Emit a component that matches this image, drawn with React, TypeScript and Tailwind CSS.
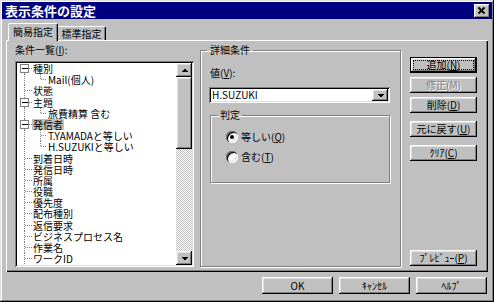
import React from "react";

/* ── WIN95 BEVELS ─────────────────────────────────── */
const raised =
  "shadow-[inset_-1px_-1px_0_#000,inset_1px_1px_0_#fff,inset_-2px_-2px_0_#808080,inset_2px_2px_0_#dfdfdf]";
const sunken =
  "shadow-[inset_1px_1px_0_#808080,inset_-1px_-1px_0_#fff,inset_2px_2px_0_#000,inset_-2px_-2px_0_#dfdfdf]";
const etched = "border border-[#808080] shadow-[inset_1px_1px_0_#fff,1px_1px_0_#fff]";

/* ── TREE DATA ────────────────────────────────────── */
type TreeRow = { label: string; level: 0 | 1; open?: boolean; last?: boolean; selected?: boolean };

const treeRows: TreeRow[] = [
  { label: "種別", level: 0, open: true },
  { label: "Mail(個人)", level: 1, last: true },
  { label: "状態", level: 0 },
  { label: "主題", level: 0, open: true },
  { label: "旅費精算 含む", level: 1, last: true },
  { label: "発信者", level: 0, open: true, selected: true },
  { label: "T.YAMADAと等しい", level: 1 },
  { label: "H.SUZUKIと等しい", level: 1, last: true },
  { label: "到着日時", level: 0 },
  { label: "発信日時", level: 0 },
  { label: "所属", level: 0 },
  { label: "役職", level: 0 },
  { label: "優先度", level: 0 },
  { label: "配布種別", level: 0 },
  { label: "返信要求", level: 0 },
  { label: "ビジネスプロセス名", level: 0 },
  { label: "作業名", level: 0 },
  { label: "ワークID", level: 0 },
];

const ROW_H = 11.2;
const MID = 5.5;

function Dots(props: { x1: number; y1: number; x2: number; y2: number }) {
  return <line {...props} stroke="#808080" strokeDasharray="1 1" />;
}

function Gutter({ row, first }: { row: TreeRow; first: boolean }) {
  const w = row.level === 0 ? 15 : 30;
  return (
    <svg width={w} height={ROW_H} className="shrink-0" shapeRendering="crispEdges">
      <Dots x1={7.5} y1={first ? MID : 0} x2={7.5} y2={ROW_H} />
      {row.level === 0 && <Dots x1={8} y1={MID} x2={15} y2={MID} />}
      {row.level === 0 && row.open && (
        <>
          <rect x={3.5} y={MID - 4} width={8} height={8} fill="#fff" stroke="#808080" />
          <line x1={5} y1={MID} x2={11} y2={MID} stroke="#000" />
        </>
      )}
      {row.level === 1 && (
        <>
          <Dots x1={23.5} y1={0} x2={23.5} y2={row.last ? MID : ROW_H} />
          <Dots x1={24} y1={MID} x2={30} y2={MID} />
        </>
      )}
    </svg>
  );
}

function Arrow({ down }: { down?: boolean }) {
  return (
    <svg width="16" height="14" shapeRendering="crispEdges">
      <polygon points={down ? "5,6 12,6 8.5,9.5" : "5,9 12,9 8.5,5.5"} fill="#000" />
    </svg>
  );
}

function Btn({
  children, className = "", isDefault, disabled,
}: { children: React.ReactNode; className?: string; isDefault?: boolean; disabled?: boolean }) {
  return (
    <div className={`flex items-center justify-center bg-[#c0c0c0] leading-none ${raised} ${isDefault ? "border border-black" : ""} ${className}`}>
      {isDefault ? (
        <span className="flex-1 self-stretch m-[2px] border border-dotted border-black flex items-center justify-center">
          {children}
        </span>
      ) : (
        <span className={disabled ? "text-[#808080] [text-shadow:1px_1px_0_#fff]" : ""}>{children}</span>
      )}
    </div>
  );
}

function Radio({ label, checked }: { label: React.ReactNode; checked?: boolean }) {
  return (
    <div className="flex items-center h-[12px] pl-[15px] gap-[3px]">
      <span className="w-[12px] h-[12px] rounded-full bg-white flex items-center justify-center shadow-[inset_1px_1px_0_#808080,inset_2px_2px_0_#000,inset_-1px_-1px_0_#fff,inset_-2px_-2px_0_#dfdfdf]">
        {checked && <span className="w-[4px] h-[4px] rounded-full bg-black" />}
      </span>
      <span className="leading-none">{label}</span>
    </div>
  );
}

const U = ({ c }: { c: string }) => <span className="underline underline-offset-[1px]">{c}</span>;

/* ── DIALOG ───────────────────────────────────────── */
export default function App() {
  return (
    <div className="w-[494px] h-[302px] bg-[#c0c0c0] p-[2px] flex flex-col font-['Noto_Sans_CJK_JP',sans-serif] text-[10px] text-black shadow-[inset_-1px_-1px_0_#000,inset_1px_1px_0_#dfdfdf,inset_-2px_-2px_0_#808080,inset_2px_2px_0_#fff]">

      {/* title bar */}
      <div className="h-[17px] bg-[#000080] flex items-center justify-between pl-[3px] pr-[2px]">
        <span className="text-white text-[13px] font-bold leading-none">表示条件の設定</span>
        <div className={`w-[16px] h-[14px] bg-[#c0c0c0] ${raised} flex items-center justify-center`}>
          <svg width="16" height="14">
            <path d="M4.5 3.5 L10.5 9.5 M10.5 3.5 L4.5 9.5" stroke="#000" strokeWidth="1.8" />
          </svg>
        </div>
      </div>

      {/* tabs */}
      <div className="mt-[4px] ml-[6px] h-[17px] flex items-end">
        <div className="relative z-10 -mb-px h-[18px] w-[50px] bg-[#c0c0c0] border-l border-t border-r border-l-white border-t-white border-r-black rounded-t-[2px] shadow-[inset_-1px_0_0_#808080] flex items-center justify-center pb-[2px] leading-none">
          簡易指定
        </div>
        <div className="h-[14px] w-[48px] border-t border-r border-t-white border-r-black rounded-tr-[2px] shadow-[inset_-1px_0_0_#808080] flex items-center justify-center leading-none">
          標準指定
        </div>
      </div>

      {/* tab panel */}
      <div className="mx-[4px] h-[232px] pl-[9px] pt-[4px] flex items-start shadow-[inset_1px_1px_0_#fff,inset_-1px_-1px_0_#000,inset_-2px_-2px_0_#808080]">

        {/* condition list */}
        <div className="w-[179px] flex flex-col">
          <div className="h-[12px] leading-[12px]">条件一覧(<U c="I" />):</div>
          <div className={`mt-[5px] h-[206px] bg-white p-[2px] flex ${sunken}`}>
            <div className="flex-1 flex flex-col">
              {treeRows.map((row, i) => (
                <div key={row.label} className="h-[11.2px] flex items-center shrink-0">
                  <Gutter row={row} first={i === 0} />
                  <span className={`px-[1px] h-[11.2px] leading-[11.2px] whitespace-nowrap ${row.selected ? "bg-[#c0c0c0]" : ""}`}>
                    {row.label}
                  </span>
                </div>
              ))}
            </div>
            <div className="w-[16px] flex flex-col">
              <div className={`h-[14px] bg-[#c0c0c0] ${raised}`}><Arrow /></div>
              <div className={`h-[72px] bg-[#c0c0c0] ${raised}`} />
              <div className="flex-1 bg-[repeating-conic-gradient(#c0c0c0_0%_25%,#ffffff_0%_50%)] bg-[length:2px_2px]" />
              <div className={`h-[14px] bg-[#c0c0c0] ${raised}`}><Arrow down /></div>
            </div>
          </div>
        </div>

        {/* detail group */}
        <fieldset className={`ml-[6px] w-[201px] h-[223px] min-w-0 flex flex-col ${etched}`}>
          <legend className="ml-[6px] px-[3px] h-[12px] leading-[12px]">詳細条件</legend>
          <div className="mt-[11px] ml-[9px] h-[12px] leading-[12px]">値(<U c="V" />):</div>
          <div className={`mt-[8px] ml-[8px] w-[181px] h-[16px] bg-white p-[2px] flex ${sunken}`}>
            <span className="flex-1 pl-[1px] flex items-center leading-none">H.SUZUKI</span>
            <div className={`w-[16px] h-full bg-[#c0c0c0] ${raised} flex items-center justify-center`}>
              <svg width="16" height="12" shapeRendering="crispEdges">
                <polygon points="5,5 12,5 8.5,8.5" fill="#000" />
              </svg>
            </div>
          </div>
          <fieldset className={`mt-[6px] ml-[9px] w-[180px] h-[74px] min-w-0 ${etched}`}>
            <legend className="ml-[7px] px-[2px] h-[12px] leading-[12px]">判定</legend>
            <div className="mt-[10px]"><Radio checked label={<>等しい(<U c="Q" />)</>} /></div>
            <div className="mt-[8px]"><Radio label={<>含む(<U c="T" />)</>} /></div>
          </fieldset>
        </fieldset>

        {/* action buttons */}
        <div className="ml-[9px] mt-[13px] w-[67px] flex flex-col">
          <Btn isDefault className="h-[16px]">追加(<U c="N" />)</Btn>
          <Btn disabled className="mt-[4px] h-[16px]">修正(M)</Btn>
          <Btn className="mt-[4px] h-[16px]">削除(<U c="D" />)</Btn>
          <Btn className="mt-[8px] h-[16px]">元に戻す(<U c="U" />)</Btn>
          <Btn className="mt-[8px] h-[16px]">ｸﾘｱ(<U c="C" />)</Btn>
          <Btn className="mt-[89px] h-[16px]">ﾌﾟﾚﾋﾞｭｰ(<U c="P" />)</Btn>
        </div>
      </div>

      {/* dialog buttons */}
      <div className="mt-[5px] mr-[5px] flex justify-end gap-[6px]">
        <Btn className="w-[71px] h-[17px]">OK</Btn>
        <Btn className="w-[71px] h-[17px]">ｷｬﾝｾﾙ</Btn>
        <Btn className="w-[71px] h-[17px]">ﾍﾙﾌﾟ</Btn>
      </div>
    </div>
  );
}
